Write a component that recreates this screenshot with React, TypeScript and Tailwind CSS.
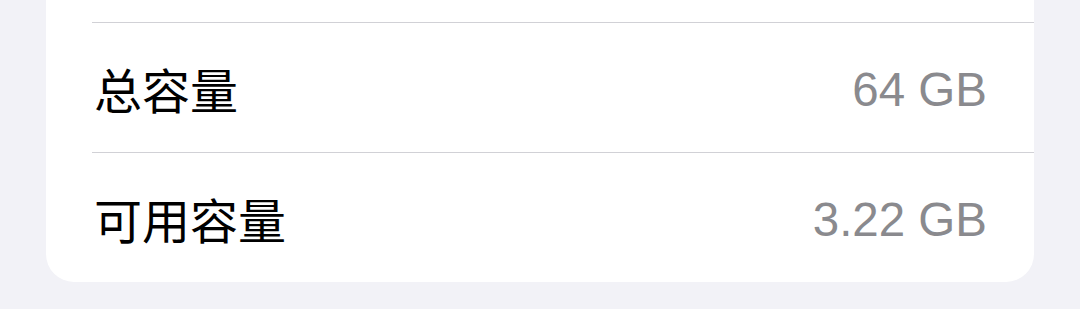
import React from "react";

const rows = [
  { label: "总容量", value: "64 GB" },
  { label: "可用容量", value: "3.22 GB" },
];

export default function App() {
  return (
    <div
      className="w-[1080px] h-[309px] bg-[#f2f2f7] overflow-hidden"
      style={{ fontFamily: '"Liberation Sans", "Noto Sans CJK SC", sans-serif' }}
    >
      <div className="ml-[46px] w-[988px] bg-white rounded-b-[28px]">
        <div className="h-[22px]" />
        {rows.map((r) => (
          <div key={r.label} className="ml-[46px] border-t border-[#d1d1d6] h-[130px] flex items-center justify-between pr-[47px] pl-[2px]">
            <span className="text-[48px] leading-none text-black" style={{ fontFamily: '"Noto Sans CJK SC", sans-serif' }}>
              {r.label}
            </span>
            <span className="text-[47.5px] leading-none text-[#8a8a8e] mt-[5px]">{r.value}</span>
          </div>
        ))}
      </div>
    </div>
  );
}
